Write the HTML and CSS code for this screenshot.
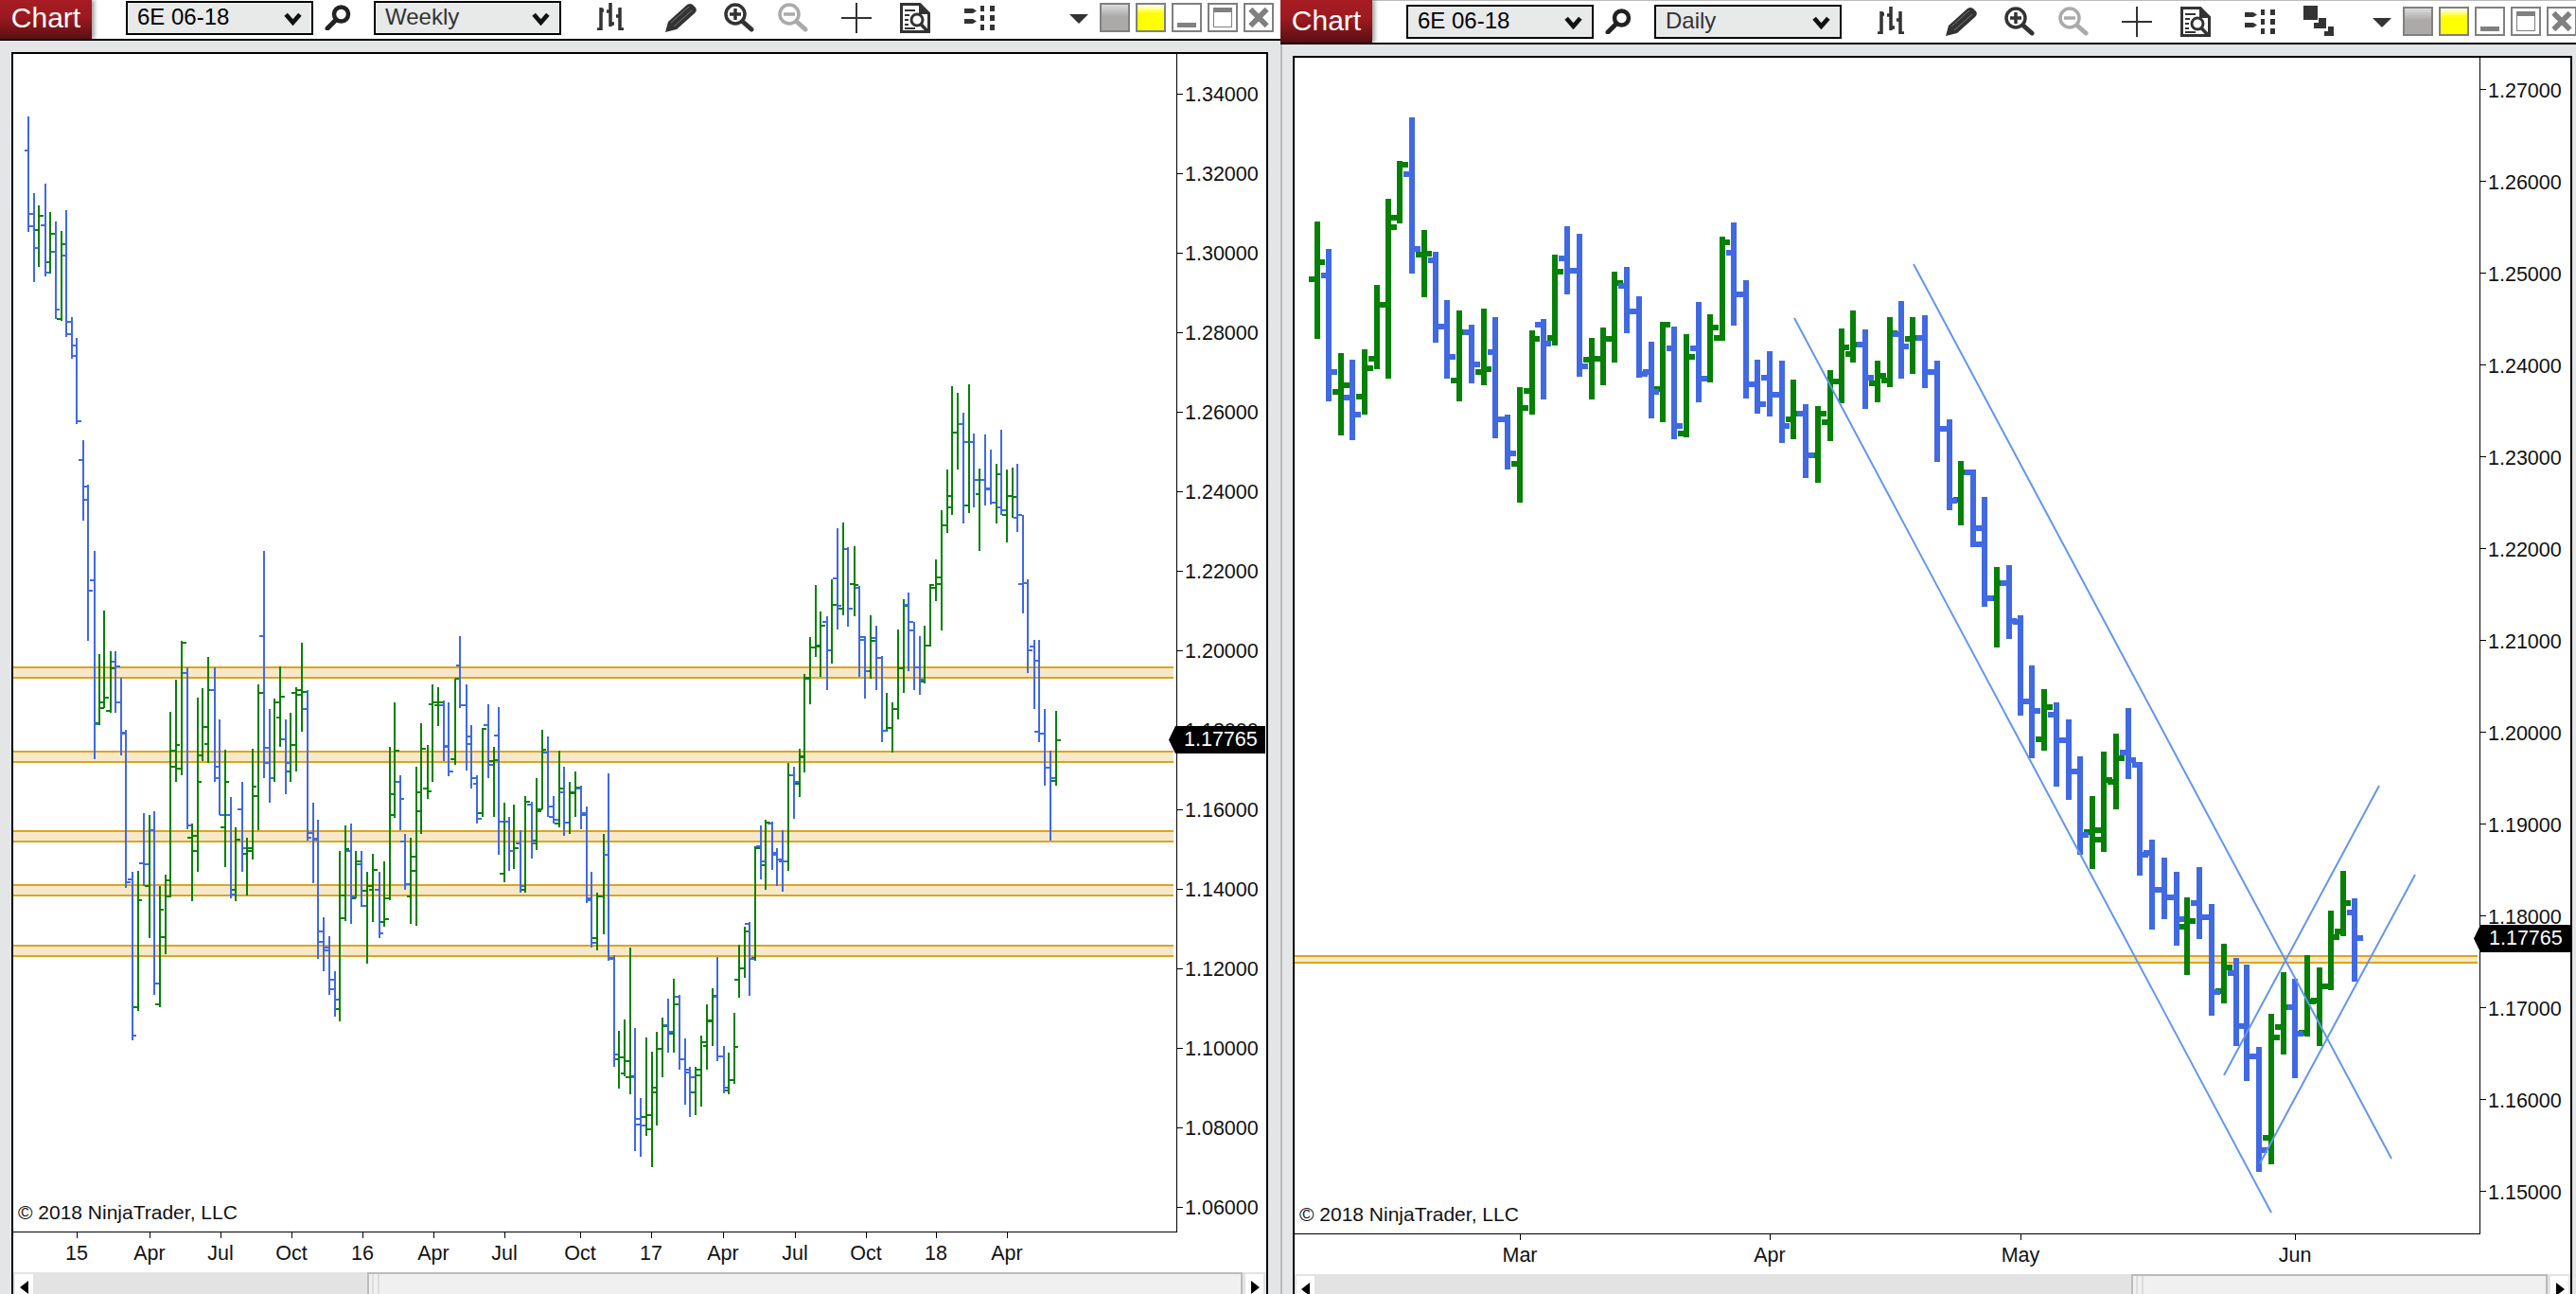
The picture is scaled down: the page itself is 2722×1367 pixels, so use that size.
FILE: index.html
```html
<!DOCTYPE html>
<html lang="en">
<head>
<meta charset="utf-8">
<title>Chart</title>
<link rel="stylesheet" href="styles.css">
</head>
<body>
<svg class="defs" width="0" height="0" aria-hidden="true">
  <symbol id="i-search" viewBox="0 0 28 27"><circle cx="17.500" cy="10" r="7.500" fill="none" stroke="#222" stroke-width="4.500"/><path d="M11 17 3 25" stroke="#222" stroke-width="5" stroke-linecap="round"/></symbol>
  <symbol id="i-chev" viewBox="0 0 18 13"><path d="M2 2 9 10 16 2" fill="none" stroke="#111" stroke-width="4.500"/></symbol>
  <symbol id="i-bars" viewBox="0 0 30 29"><path d="M5 5V29M1 28H5M5 8H8M15 0V25M11 9H15M15 22H19M25 5V29M21 14H25M25 28H29" fill="none" stroke="#333" stroke-width="3.500"/></symbol>
  <symbol id="i-pencil" viewBox="0 0 33 31"><path d="M0 31 3 20 23 2Q26 0 29 2L32 5Q34 8 31 11L12 28Z" fill="#333"/><path d="M6 21 25 4M9 25 28 8" stroke="#777" stroke-width="1"/></symbol>
  <symbol id="i-zin" viewBox="0 0 32 31"><circle cx="12" cy="12" r="10" fill="none" stroke="#333" stroke-width="3.500"/><path d="M6 12H18M12 6V18" stroke="#333" stroke-width="3.500"/><path d="M20 20 29 28" stroke="#333" stroke-width="5" stroke-linecap="round"/></symbol>
  <symbol id="i-zout" viewBox="0 0 32 31"><circle cx="12" cy="12" r="10" fill="none" stroke="#aaa" stroke-width="3.500"/><path d="M6 12H18" stroke="#aaa" stroke-width="3.500"/><path d="M20 20 29 28" stroke="#aaa" stroke-width="5" stroke-linecap="round"/></symbol>
  <symbol id="i-cross" viewBox="0 0 32 32"><path d="M0 16H32M16 0V32" stroke="#333" stroke-width="2"/></symbol>
  <symbol id="i-doc" viewBox="0 0 32 32"><path d="M1.500 1.500H21L30.500 11V30.500H1.500Z" fill="#fff" stroke="#333" stroke-width="3"/><path d="M20 1 31 12H20Z" fill="#333"/><path d="M5 8H16M5 13H10M5 18H9M5 23H9M5 27H16" stroke="#333" stroke-width="2"/><circle cx="18" cy="18" r="6" fill="#fff" stroke="#333" stroke-width="3"/><path d="M22 22.500 30 31" stroke="#333" stroke-width="3.500"/></symbol>
  <symbol id="i-grid" viewBox="0 0 32 26"><path d="M0 3H9L13 5.500 9 8H0ZM0 14H9L13 16.500 9 19H0Z" fill="#333"/><path d="M17 0h4v6h-4zM27 0h5v6h-5zM17 10h4v6h-4zM27 10h5v6h-5zM17 20h4v6h-4zM27 20h5v6h-5z" fill="#333"/></symbol>
  <symbol id="i-casc" viewBox="0 0 32 32"><path d="M0 0H15V15H0ZM16 13H24V24H11V18H16ZM26 22H32V32H22V27H26Z" fill="#333"/></symbol>
  <symbol id="i-x" viewBox="0 0 28 28"><path d="M5 5 23 23M23 5 5 23" stroke="#808080" stroke-width="6"/></symbol>
</svg>

<div class="panel panel-weekly">
  <header class="toolbar">
    <div class="tile">Chart</div>
    <div class="select sel-instrument"><span>6E 06-18</span><svg class="chev"><use href="#i-chev"/></svg></div>
    <svg class="ico search"><use href="#i-search"/></svg>
    <div class="select sel-period"><span>Weekly</span><svg class="chev"><use href="#i-chev"/></svg></div>
    <svg class="ico bars"><use href="#i-bars"/></svg>
    <svg class="ico pencil"><use href="#i-pencil"/></svg>
    <svg class="ico zin"><use href="#i-zin"/></svg>
    <svg class="ico zout"><use href="#i-zout"/></svg>
    <svg class="ico cross"><use href="#i-cross"/></svg>
    <svg class="ico doc"><use href="#i-doc"/></svg>
    <svg class="ico grid"><use href="#i-grid"/></svg>
    <div class="tri tri-weekly"></div>
    <div class="win win-grey"></div>
    <div class="win win-yellow"></div>
    <div class="win"><span class="win-min"></span></div>
    <div class="win"><span class="win-max"></span></div>
    <div class="win"><svg class="win-x"><use href="#i-x"/></svg></div>
  </header>
  <div class="body">
    <div class="frame">
      <div class="chart-row">
        <div class="plot">
          <svg class="canvas" viewBox="14 57 1229 1244" width="1229" height="1244">
            <path class="band" d="M14 705H1240V716H14ZM14 794H1240V805H14ZM14 878H1240V889H14ZM14 935H1240V946H14ZM14 999H1240V1010H14Z"/>
            <path class="band-line" d="M14 705H1240M14 716H1240M14 794H1240M14 805H1240M14 878H1240M14 889H1240M14 935H1240M14 946H1240M14 999H1240M14 1010H1240"/>
            <g transform="translate(14 100) scale(.78444 .73337)">
              <path class="w up" d="M35 160V248M29 195h6M35 174h6M50 169V258M44 241h6M50 200h6M65 197V326M59 323h6M65 216h6M116 806V908M110 905h6M116 883h6M123 743V883M117 876h6M123 868h6M131 802V890M125 888h6M131 826h6M168 1118V1320M162 1314h6M168 1160h6M183 1037V1215M177 1140h6M183 1060h6M197 1140V1315M191 1311h6M197 1174h6M205 1123V1238M199 1213h6M205 1132h6M212 889V1156M206 1155h6M212 945h6M219 843V990M213 968h6M219 937h6M227 787V980M221 971h6M227 790h6M241 1050V1162M235 1070h6M241 1067h6M248 868V1120M242 1090h6M248 990h6M255 855V960M249 952h6M255 911h6M263 810V962M257 935h6M263 858h6M285 944V1112M279 1055h6M285 990h6M300 1055V1162M294 1145h6M300 1073h6M315 1070V1153M309 1093h6M315 1085h6M322 942V1102M316 1090h6M322 997h6M330 850V1060M324 1010h6M330 862h6M352 870V990M346 985h6M352 875h6M360 823V940M354 897h6M360 867h6M374 890V990M368 975h6M374 937h6M381 853V975M375 862h6M381 865h6M389 789V917M383 858h6M389 860h6M440 1090V1335M434 1317h6M440 1153h6M447 1053V1190M441 1186h6M447 1087h6M462 1090V1158M456 1158h6M462 1105h6M477 1120V1252M471 1147h6M477 1140h6M485 1093V1192M479 1145h6M485 1117h6M500 1105V1198M494 1192h6M500 1188h6M507 940V1160M501 1157h6M507 1007h6M514 875V1042M508 1037h6M514 945h6M536 1070V1195M530 1155h6M536 1097h6M543 968V1197M537 1118h6M543 1032h6M550 905V1065M544 1005h6M550 942h6M558 937V1015M552 1000h6M558 1003h6M565 850V990M559 878h6M565 875h6M573 853V910M567 880h6M573 875h6M595 841V965M589 957h6M595 842h6M632 912V1040M626 1035h6M632 913h6M647 940V1040M641 960h6M647 958h6M661 1020V1135M655 1122h6M661 1047h6M675 1023V1115M669 1090h6M675 1086h6M690 1010V1150M684 1145h6M690 1018h6M705 985V1088M699 1075h6M705 1032h6M712 915V1030M706 1030h6M712 943h6M735 945V1055M729 1050h6M735 1000h6M750 990V1065M744 1048h6M750 1005h6M757 975V1040M751 1006h6M757 998h6M786 1150V1232M780 1215h6M786 1155h6M795 1065V1210M789 1155h6M795 1095h6M816 1348V1432M810 1390h6M816 1387h6M824 1332V1414M818 1410h6M824 1392h6M831 1228V1440M825 1415h6M831 1414h6M853 1358V1500M847 1472h6M853 1470h6M860 1378V1545M854 1490h6M860 1437h6M867 1350V1485M861 1430h6M867 1375h6M875 1330V1415M869 1375h6M875 1342h6M890 1273V1380M884 1352h6M890 1310h6M919 1400V1470M913 1437h6M919 1413h6M927 1355V1458M921 1405h6M927 1365h6M935 1310V1405M929 1370h6M935 1333h6M942 1287V1370M936 1335h6M942 1298h6M964 1380V1440M958 1435h6M964 1420h6M971 1323V1425M965 1420h6M971 1372h6M978 1224V1301M972 1275h6M978 1258h6M985 1198V1272M979 1258h6M985 1205h6M1000 1083V1248M994 1243h6M1000 1086h6M1014 1045V1146M1008 1110h6M1014 1048h6M1044 962V1118M1038 1105h6M1044 980h6M1059 942V1012M1053 992h6M1059 953h6M1066 835V976M1060 955h6M1066 842h6M1073 782V878M1067 840h6M1073 797h6M1081 706V810M1075 797h6M1081 793h6M1088 745V838M1082 795h6M1088 765h6M1103 698V820M1097 800h6M1103 735h6M1118 616V750M1112 740h6M1118 655h6M1133 650V752M1127 705h6M1133 707h6M1155 750V842M1149 830h6M1155 787h6M1177 862V918M1171 916h6M1177 912h6M1184 875V947M1178 912h6M1184 885h6M1192 770V900M1186 885h6M1192 827h6M1199 727V862M1193 827h6M1199 737h6M1228 765V848M1222 846h6M1228 793h6M1235 705V795M1229 793h6M1235 707h6M1243 670V730M1237 710h6M1243 695h6M1250 598V772M1244 705h6M1250 620h6M1258 540V632M1252 620h6M1258 594h6M1265 420V605M1259 578h6M1265 487h6M1272 430V540M1266 487h6M1272 475h6M1287 417V603M1281 592h6M1287 500h6M1302 538V657M1296 575h6M1302 555h6M1324 532V618M1318 588h6M1324 547h6M1338 540V645M1332 605h6M1338 578h6M1346 537V610M1340 578h6M1346 580h6M1405 888V996M1399 988h6M1405 930h6"/>
              <path class="w down" d="M21 31V198M15 81h6M21 172h6M28 142V270M22 190h6M28 221h6M43 128V262M37 188h6M43 257h6M57 183V323M51 227h6M57 309h6M72 166V349M66 232h6M72 345h6M79 320V381M73 327h6M79 362h6M86 350V475M80 376h6M86 471h6M94 498V613M88 526h6M94 565h6M101 562V787M95 583h6M101 714h6M109 657V957M103 700h6M109 907h6M138 802V890M132 817h6M138 823h6M145 840V952M139 876h6M145 919h6M152 915V1143M146 921h6M152 1134h6M160 1120V1362M154 1130h6M160 1356h6M176 1035V1140M170 1107h6M176 1108h6M190 1032V1297M184 1060h6M190 1281h6M234 825V1058M228 833h6M234 1052h6M271 825V990M265 858h6M271 968h6M278 900V1038M272 985h6M278 1037h6M293 1012V1157M287 1037h6M293 1152h6M308 990V1120M302 1030h6M308 1085h6M338 657V985M332 780h6M338 963h6M345 885V1020M339 941h6M345 985h6M367 900V1007M361 928h6M367 962h6M396 858V1075M390 885h6M396 1070h6M404 1020V1136M398 1063h6M404 1072h6M411 1045V1245M405 1073h6M411 1220h6M418 1185V1262M412 1205h6M418 1232h6M426 1212V1297M420 1228h6M426 1275h6M433 1262V1328M427 1288h6M433 1303h6M455 1050V1195M449 1090h6M455 1155h6M469 1090V1170M463 1108h6M469 1168h6M493 1120V1215M487 1145h6M493 1208h6M521 980V1060M515 990h6M521 1014h6M528 1065V1145M522 1076h6M528 1137h6M580 873V960M574 880h6M580 938h6M587 875V982M581 940h6M587 975h6M602 780V883M596 822h6M602 880h6M610 850V973M604 880h6M610 925h6M617 908V1000M611 935h6M617 985h6M625 980V1050M619 992h6M625 1043h6M640 878V985M634 908h6M640 965h6M654 882V1095M648 923h6M654 1047h6M668 1040V1118M662 1047h6M668 1090h6M683 1060V1150M677 1078h6M683 1140h6M698 1018V1100M692 1022h6M698 1078h6M720 925V1040M714 948h6M720 1025h6M728 1010V1050M722 1040h6M728 1045h6M742 968V1068M736 1005h6M742 1048h6M765 995V1058M759 1000h6M765 1035h6M772 1025V1165M766 1037h6M772 1158h6M779 1120V1228M773 1160h6M779 1222h6M802 977V1248M796 1095h6M802 1243h6M809 1240V1400M803 1245h6M809 1383h6M838 1345V1522M832 1415h6M838 1483h6M845 1445V1530M839 1475h6M845 1485h6M882 1302V1380M876 1340h6M882 1350h6M897 1297V1405M891 1300h6M897 1390h6M905 1360V1455M899 1390h6M905 1405h6M912 1400V1473M906 1408h6M912 1415h6M949 1242V1392M943 1300h6M949 1385h6M957 1370V1438M951 1385h6M957 1430h6M992 1192V1298M986 1195h6M992 1245h6M1007 1052V1130M1001 1083h6M1007 1105h6M1022 1047V1117M1016 1050h6M1022 1092h6M1029 1085V1140M1023 1095h6M1029 1102h6M1037 1060V1148M1031 1105h6M1037 1105h6M1052 968V1043M1046 980h6M1052 990h6M1096 752V858M1090 760h6M1096 800h6M1110 625V770M1104 697h6M1110 737h6M1125 652V767M1119 655h6M1125 740h6M1140 708V838M1134 710h6M1140 782h6M1147 780V870M1141 785h6M1147 830h6M1162 765V858M1156 783h6M1162 812h6M1170 808V932M1164 812h6M1170 916h6M1206 717V830M1200 735h6M1206 760h6M1213 760V858M1207 772h6M1213 825h6M1221 780V865M1215 825h6M1221 843h6M1280 458V618M1274 475h6M1280 500h6M1294 488V595M1288 500h6M1294 555h6M1309 490V592M1303 555h6M1309 567h6M1317 512V590M1311 568h6M1317 588h6M1331 483V605M1325 595h6M1331 598h6M1353 532V630M1347 610h6M1353 605h6M1360 605V747M1354 705h6M1360 703h6M1367 698V833M1361 703h6M1367 800h6M1375 785V885M1369 795h6M1375 815h6M1382 785V933M1376 918h6M1382 920h6M1390 885V995M1384 920h6M1390 970h6M1397 945V1074M1391 970h6M1397 985h6"/>
            </g>
          </svg>
          <div class="copy">© 2018 NinjaTrader, LLC</div>
        </div>
        <div class="axis axis-weekly">
          <div class="ylab">1.34000</div><div class="ylab">1.32000</div><div class="ylab">1.30000</div><div class="ylab">1.28000</div><div class="ylab">1.26000</div><div class="ylab">1.24000</div><div class="ylab">1.22000</div><div class="ylab">1.20000</div><div class="ylab">1.18000</div><div class="ylab">1.16000</div><div class="ylab">1.14000</div><div class="ylab">1.12000</div><div class="ylab">1.10000</div><div class="ylab">1.08000</div><div class="ylab">1.06000</div>
          <div class="marker marker-weekly">1.17765</div>
        </div>
      </div>
      <div class="time">
        <div class="tm" style="margin-left:67px">15</div><div class="tm" style="margin-left:77px">Apr</div><div class="tm" style="margin-left:75px">Jul</div><div class="tm" style="margin-left:75px">Oct</div><div class="tm" style="margin-left:75px">16</div><div class="tm" style="margin-left:75px">Apr</div><div class="tm" style="margin-left:75px">Jul</div><div class="tm" style="margin-left:80px">Oct</div><div class="tm" style="margin-left:75px">17</div><div class="tm" style="margin-left:76px">Apr</div><div class="tm" style="margin-left:76px">Jul</div><div class="tm" style="margin-left:75px">Oct</div><div class="tm" style="margin-left:74px">18</div><div class="tm" style="margin-left:75px">Apr</div>
      </div>
      <div class="scroll">
        <div class="sbtn"><i class="arr-l"></i></div>
        <div class="trough trough-weekly"></div>
        <div class="thumb"><i></i><i></i></div>
        <div class="sbtn"><i class="arr-r"></i></div>
      </div>
    </div>
  </div>
</div>

<div class="panel panel-daily">
  <header class="toolbar">
    <div class="tile">Chart</div>
    <div class="select sel-instrument"><span>6E 06-18</span><svg class="chev"><use href="#i-chev"/></svg></div>
    <svg class="ico search"><use href="#i-search"/></svg>
    <div class="select sel-period"><span>Daily</span><svg class="chev"><use href="#i-chev"/></svg></div>
    <svg class="ico bars"><use href="#i-bars"/></svg>
    <svg class="ico pencil"><use href="#i-pencil"/></svg>
    <svg class="ico zin"><use href="#i-zin"/></svg>
    <svg class="ico zout"><use href="#i-zout"/></svg>
    <svg class="ico cross"><use href="#i-cross"/></svg>
    <svg class="ico doc"><use href="#i-doc"/></svg>
    <svg class="ico grid"><use href="#i-grid"/></svg>
    <svg class="ico casc"><use href="#i-casc"/></svg>
    <div class="tri tri-daily"></div>
    <div class="win win-grey"></div>
    <div class="win win-yellow"></div>
    <div class="win"><span class="win-min"></span></div>
    <div class="win"><span class="win-max"></span></div>
    <div class="win"><svg class="win-x"><use href="#i-x"/></svg></div>
  </header>
  <div class="body">
    <div class="frame">
      <div class="chart-row">
        <div class="plot">
          <svg class="canvas" viewBox="1368 61 1252 1242" width="1252" height="1242">
            <path class="band" d="M1368 1010H2618V1017H1368Z"/>
            <path class="band-line" d="M1368 1010H2618M1368 1017H2618"/>
            <g transform="translate(1370 100) scale(.7972 .73337)">
              <path class="d up" d="M27 183V352M16 266h11M27 242h11M59 372V491M48 428h11M59 418h11M90 367V461M79 435h11M90 394h11M106 274V396M95 381h11M106 303h11M122 150V409M111 303h11M122 191h11M137 95V185M126 177h11M137 101h11M169 195V292M158 230h11M169 229h11M216 311V442M205 412h11M216 342h11M248 308V419M237 399h11M248 396h11M296 421V588M285 532h11M296 452h11M312 340V461M301 427h11M312 352h11M343 230V361M332 350h11M343 255h11M391 350V439M380 382h11M391 380h11M406 335V419M395 380h11M406 352h11M422 255V386M411 352h11M422 272h11M485 327V472M474 424h11M485 332h11M517 345V494M506 488h11M517 378h11M548 316V415M537 409h11M548 336h11M564 204V355M553 350h11M564 213h11M659 410V496M648 468h11M659 459h11M691 449V559M680 520h11M691 459h11M707 397V499M696 472h11M707 413h11M722 337V444M711 413h11M722 364h11M738 311V386M727 374h11M738 360h11M770 383V443M759 416h11M770 405h11M786 320V421M775 412h11M786 343h11M817 320V402M806 352h11M817 351h11M881 528V620M870 583h11M881 544h11M928 680V796M917 726h11M928 704h11M991 856V945M980 928h11M991 882h11M1055 1010V1115M1044 1062h11M1055 1060h11M1070 946V1091M1059 1073h11M1070 987h11M1086 920V1029M1075 990h11M1086 956h11M1181 1156V1268M1170 1198h11M1181 1191h11M1229 1223V1309M1218 1291h11M1229 1257h11M1292 1324V1541M1281 1503h11M1292 1358h11M1308 1264V1382M1297 1343h11M1308 1315h11M1340 1240V1357M1329 1351h11M1340 1306h11M1356 1257V1370M1345 1305h11M1356 1285h11M1371 1175V1290M1360 1284h11M1371 1214h11M1387 1118V1212M1376 1205h11M1387 1165h11"/>
              <path class="d down" d="M43 222V442M32 260h11M43 399h11M74 382V498M63 437h11M74 461h11M153 33V258M142 115h11M153 222h11M185 226V357M174 239h11M185 334h11M200 296V409M189 334h11M200 378h11M232 331V416M221 342h11M232 389h11M264 320V495M253 371h11M264 468h11M280 461V540M269 468h11M280 517h11M327 323V439M316 332h11M327 359h11M359 190V288M348 236h11M359 254h11M375 200V406M364 254h11M375 391h11M438 248V344M427 276h11M438 312h11M454 290V408M443 312h11M454 402h11M470 356V466M459 400h11M470 428h11M501 334V496M490 365h11M501 477h11M533 299V443M522 365h11M533 409h11M580 184V333M569 228h11M580 288h11M596 267V438M585 288h11M596 417h11M611 382V459M600 417h11M611 446h11M627 370V464M616 408h11M627 432h11M643 383V502M632 432h11M643 477h11M675 446V552M664 459h11M675 520h11M754 338V453M743 360h11M754 408h11M801 297V409M790 345h11M801 363h11M833 318V423M822 351h11M833 400h11M849 383V529M838 400h11M849 481h11M865 468V599M854 482h11M865 585h11M897 540V652M886 544h11M897 624h11M912 579V738M901 648h11M912 726h11M944 678V784M933 703h11M944 758h11M960 750V894M949 760h11M960 874h11M975 822V956M964 874h11M975 888h11M1007 875V997M996 893h11M1007 930h11M1023 900V1016M1012 930h11M1023 975h11M1039 953V1095M1028 975h11M1039 1066h11M1102 884V986M1091 948h11M1102 958h11M1118 961V1125M1107 966h11M1118 1095h11M1134 1073V1203M1123 1092h11M1134 1146h11M1150 1099V1188M1139 1146h11M1150 1156h11M1166 1119V1226M1155 1156h11M1166 1188h11M1197 1113V1216M1186 1164h11M1197 1185h11M1213 1166V1327M1202 1185h11M1213 1292h11M1245 1244V1370M1234 1266h11M1245 1342h11M1260 1253V1421M1249 1342h11M1260 1386h11M1276 1372V1552M1265 1386h11M1276 1520h11M1324 1273V1417M1313 1315h11M1324 1352h11M1403 1158V1278M1392 1178h11M1403 1215h11"/>
            </g>
            <path class="trend" d="M1896 336 2400 1281M2022 279 2527 1224M2350 1136 2514 830M2388 1229 2552 924"/>
          </svg>
          <div class="copy">© 2018 NinjaTrader, LLC</div>
        </div>
        <div class="axis axis-daily">
          <div class="ylab">1.27000</div><div class="ylab">1.26000</div><div class="ylab">1.25000</div><div class="ylab">1.24000</div><div class="ylab">1.23000</div><div class="ylab">1.22000</div><div class="ylab">1.21000</div><div class="ylab">1.20000</div><div class="ylab">1.19000</div><div class="ylab">1.18000</div><div class="ylab">1.17000</div><div class="ylab">1.16000</div><div class="ylab">1.15000</div>
          <div class="marker marker-daily">1.17765</div>
        </div>
      </div>
      <div class="time">
        <div class="tm" style="margin-left:238px">Mar</div><div class="tm" style="margin-left:264px">Apr</div><div class="tm" style="margin-left:265px">May</div><div class="tm" style="margin-left:290px">Jun</div>
      </div>
      <div class="scroll">
        <div class="sbtn"><i class="arr-l"></i></div>
        <div class="trough trough-daily"></div>
        <div class="thumb"><i></i><i></i></div>
        <div class="sbtn"><i class="arr-r"></i></div>
      </div>
    </div>
  </div>
</div>
</body>
</html>
```

FILE: styles.css
```css
* { box-sizing: border-box; }
html, body { margin: 0; padding: 0; }
body {
  width: 2722px;
  height: 1367px;
  overflow: hidden;
  display: flex;
  background: #fff;
  font-family: "Liberation Sans", Arial, sans-serif;
  color: #111;
}
.defs { position: absolute; }

.panel { display: flex; flex-direction: column; height: 1367px; overflow: hidden; }
.panel-weekly { width: 1353px; }
.panel-daily { width: 1369px; }

/* toolbar */
.toolbar {
  display: flex;
  align-items: flex-start;
  flex: none;
  background: #fff;
  border-bottom: 2px solid #000;
  overflow: hidden;
}
.panel-weekly .toolbar { height: 43px; padding-top: 3px; }
.panel-daily .toolbar { height: 47px; padding-top: 7px; box-shadow: inset 0 1px 0 #bbb; }
.tile {
  flex: none;
  width: 97px;
  margin-right: 36px;
  color: #fff;
  font-size: 30px;
  text-align: center;
  background: linear-gradient(#a71c23 0%, #9a1a20 45%, #5a0f14 100%);
  box-shadow: 3px 0 4px rgba(0, 0, 0, .35);
}
.panel-weekly .tile { height: 41px; line-height: 38px; margin-top: -3px; }
.panel-daily .tile { height: 45px; line-height: 44px; margin-top: -7px; }

.select {
  flex: none;
  position: relative;
  width: 198px;
  height: 36px;
  margin-top: -2px;
  padding-left: 10px;
  border: 2px solid #000;
  background: #e8e9e9;
  font-size: 24px;
  line-height: 30px;
  color: #000;
}
.sel-period { margin-left: 24px; color: #333; }
.chev { position: absolute; right: 10px; top: 10px; width: 19px; height: 14px; }

.ico { flex: none; display: block; }
.search { width: 28px; height: 27px; margin: 2px 0 0 12px; }
.bars { width: 30px; height: 29px; margin-left: 37px; }
.pencil { width: 33px; height: 31px; margin-left: 43px; }
.zin { width: 32px; height: 31px; margin-left: 29px; }
.zout { width: 32px; height: 31px; margin-left: 25px; }
.cross { width: 32px; height: 32px; margin-left: 35px; }
.doc { width: 32px; height: 32px; margin-left: 30px; }
.grid { width: 32px; height: 26px; margin: 3px 0 0 36px; }
.casc { width: 32px; height: 32px; margin: -1px 0 0 30px; }

.tri {
  flex: none;
  width: 0;
  height: 0;
  margin-top: 12px;
  border-left: 10px solid transparent;
  border-right: 10px solid transparent;
  border-top: 10px solid #333;
}
.tri-weekly { margin-left: 79px; }
.tri-daily { margin-left: 41px; }

.win {
  flex: none;
  position: relative;
  width: 32px;
  height: 31px;
  margin-left: 6px;
  border: 2px solid #808080;
  background: #fff;
}
.tri + .win { margin-left: 12px; }
.win-grey { background: linear-gradient(#dcdcdc 0%, #aca9a9 45%, #aca9a9 100%); }
.win-yellow { background: linear-gradient(#fff 0%, #ff0 35%, #ff0 100%); }
.win-min { display: block; width: 20px; height: 5px; margin: 19px 0 0 4px; background: #808080; }
.win-max { display: block; width: 20px; height: 21px; margin: 3px 0 0 4px; border: 1px solid #808080; border-top-width: 5px; }
.win-x { display: block; width: 28px; height: 27px; }

/* chart body */
.body { flex: 1; min-height: 0; background: #e4e5e7; padding-top: 12px; }
.panel-weekly .body { padding-left: 12px; padding-right: 13px; }
.panel-daily .body { border-left: 2px solid #bbb; padding-left: 11px; padding-right: 4px; }
.frame {
  background: #fff;
  border: 2px solid #000;
  border-bottom: 0;
  height: 1400px;
  display: flex;
  flex-direction: column;
}
.chart-row { display: flex; flex: none; }
.panel-weekly .chart-row { height: 1245px; }
.panel-daily .chart-row { height: 1243px; }
.plot {
  position: relative;
  flex: none;
  border-right: 1px solid #000;
  border-bottom: 1px solid #000;
}
.panel-weekly .plot { width: 1230px; }
.panel-daily .plot { width: 1253px; }
.canvas { display: block; }
.band { fill: #f7e8c9; }
.band-line { fill: none; stroke: #daa520; stroke-width: 2px; shape-rendering: crispEdges; }
.w, .d { fill: none; vector-effect: non-scaling-stroke; shape-rendering: crispEdges; }
.w { stroke-width: 2px; }
.d { stroke-width: 6px; }
.up { stroke: #068006; }
.down { stroke: #4169e1; }
.trend { fill: none; stroke: #6495ed; stroke-width: 2px; }

.copy {
  position: absolute;
  left: 5px;
  bottom: 8px;
  font-size: 21px;
  line-height: 24px;
  white-space: nowrap;
}

/* price axis */
.axis { position: relative; flex: 1; display: flex; flex-direction: column; }
.ylab {
  flex: none;
  display: flex;
  align-items: center;
  padding-top: 2px;
  font-size: 21.500px;
  line-height: 24px;
}
.ylab::before {
  content: "";
  flex: none;
  width: 6px;
  height: 1px;
  margin-top: -2px;
  margin-right: 2px;
  background: #000;
}
.axis-weekly .ylab { height: 84px; }
.axis-daily .ylab { height: 97px; }
.axis-daily { margin-top: -15px; }
.marker {
  position: absolute;
  width: 102px;
  height: 29px;
  padding-left: 16px;
  background: #000;
  color: #fff;
  font-size: 21.500px;
  line-height: 29px;
  clip-path: polygon(7px 0, 100% 0, 100% 100%, 7px 100%, 0 50%);
}
.marker-weekly { left: -9px; top: 710px; }
.marker-daily { left: -7px; top: 931px; }

/* time axis */
.time { display: flex; flex: none; height: 42px; font-size: 21.500px; line-height: 24px; }
.tm { position: relative; width: 0; display: flex; justify-content: center; padding-top: 10px; white-space: nowrap; }
.tm::before { content: ""; position: absolute; top: 0; left: 0; width: 1px; height: 6px; background: #000; }

/* scrollbar */
.scroll { display: flex; flex: none; height: 30px; background: #e3e3e3; padding-left: 2px; }
.sbtn { flex: none; width: 19px; background: #fff; position: relative; margin-top: 2px; }
.sbtn i { position: absolute; top: 7px; width: 0; height: 0; border-top: 7px solid transparent; border-bottom: 7px solid transparent; }
.arr-l { left: 5px; border-right: 9px solid #000; }
.arr-r { left: 6px; border-left: 9px solid #000; }
.trough { flex: none; }
.trough-weekly { width: 353px; }
.trough-daily { width: 863px; }
.thumb {
  flex: none;
  display: flex;
  gap: 4px;
  padding-left: 3px;
  margin-right: 3px;
  border: 2px solid #bbb;
  border-bottom: 0;
  background: #f0f0f0;
}
.panel-weekly .thumb { width: 925px; }
.panel-daily .thumb { width: 440px; }
.thumb i { width: 2px; background: #ddd; }
```
